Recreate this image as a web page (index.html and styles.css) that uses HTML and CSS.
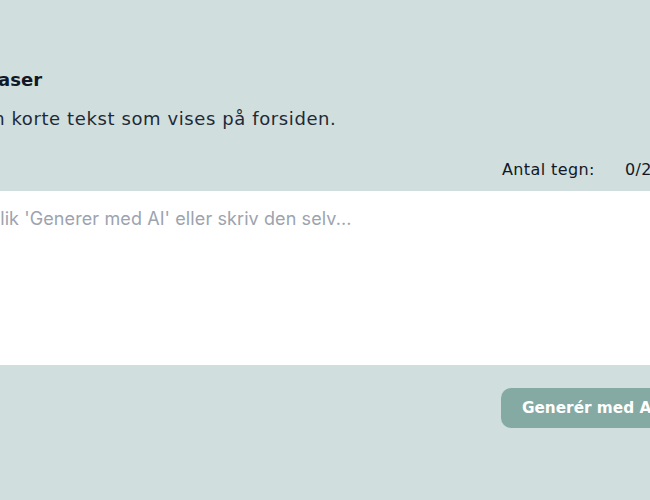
FILE: index.html
```html
<!DOCTYPE html>
<html lang="da">
<head>
<meta charset="utf-8">
<link rel="stylesheet" href="styles.css">
</head>
<body>
<div class="panel">
  <h2 class="title">Teaser</h2>
  <p class="desc">Den korte tekst som vises på forsiden.</p>
  <div class="counter">
    <span class="counter-label">Antal tegn:</span>
    <span class="counter-value">0/200</span>
  </div>
  <textarea class="field" placeholder="Klik 'Generer med AI' eller skriv den selv..."></textarea>
  <div class="actions">
    <button class="btn">Generér med AI</button>
  </div>
</div>
</body>
</html>
```
FILE: styles.css
```css
html, body {
  margin: 0;
  padding: 0;
  background: #d0dfdd;
  overflow: hidden;
}
body {
  font-family: "DejaVu Sans", "Open Sans", sans-serif;
  color: #111827;
}
.panel {
  margin-left: -24px;
  width: 702px;
  padding-top: 68px;
}
.title {
  margin: 0;
  font-size: 18px;
  font-weight: 700;
  line-height: 24px;
  color: #111827;
}
.desc {
  margin: 14px 0 0;
  text-indent: -9px;
  font-size: 18px;
  letter-spacing: 0.6px;
  line-height: 26px;
  color: #1f2937;
}
.counter {
  display: flex;
  justify-content: flex-end;
  gap: 30px;
  margin-top: 27px;
  padding-right: 5px;
  font-size: 16px;
  letter-spacing: 0.4px;
  line-height: 22px;
  color: #111827;
}
.field {
  display: block;
  box-sizing: border-box;
  width: 100%;
  height: 174px;
  margin-top: 10px;
  padding: 17px 12px;
  border: none;
  background: #ffffff;
  font-family: "Inter", sans-serif;
  font-size: 18px;
  letter-spacing: 0.1px;
  resize: none;
  outline: none;
}
.field::placeholder {
  color: #9ca3af;
}
.actions {
  display: flex;
  justify-content: flex-end;
  margin-top: 23px;
}
.btn {
  height: 40px;
  padding: 0 21px;
  border: none;
  border-radius: 10px;
  background: #84aaa3;
  color: #ffffff;
  font-family: "DejaVu Sans", sans-serif;
  font-size: 15.3px;
  font-weight: 700;
}
```
